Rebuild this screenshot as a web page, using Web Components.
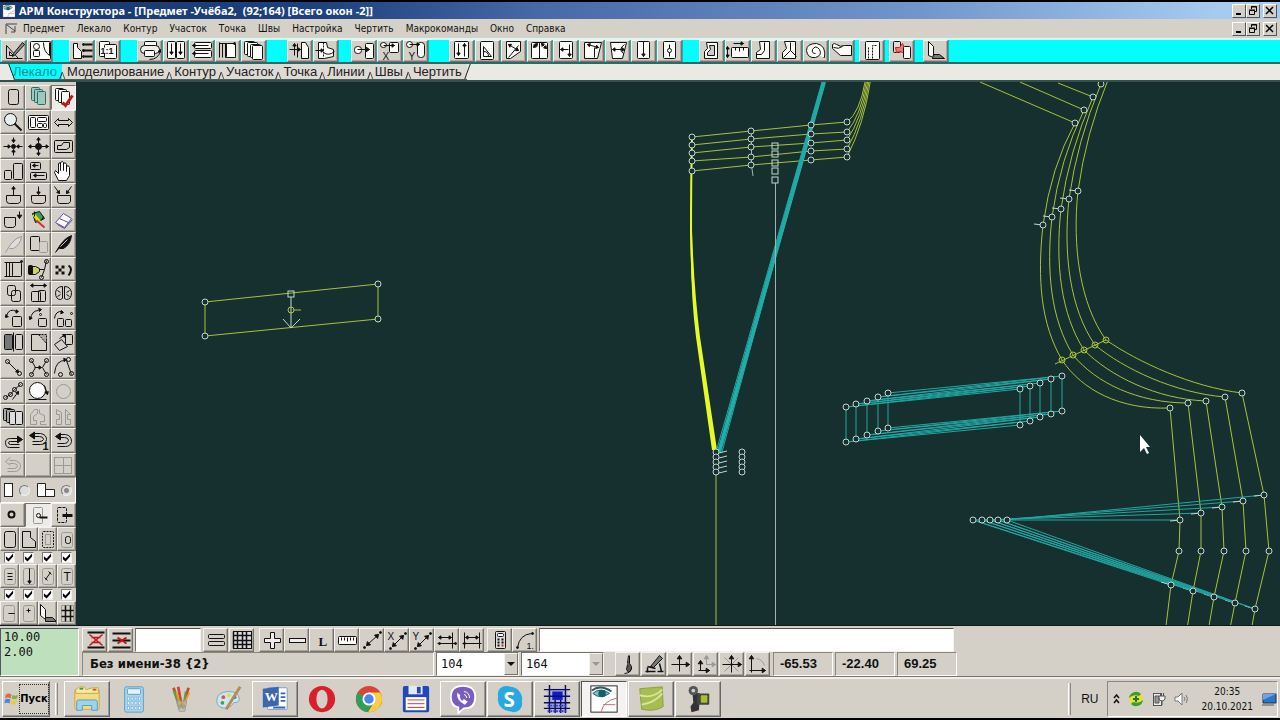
<!DOCTYPE html>
<html lang="ru">
<head>
<meta charset="utf-8">
<meta name="viewport" content="width=device-width, initial-scale=1">
<title>АРМ Конструктора</title>
<style>
html, body { margin: 0; height: 100%; background: #000; }
body { font: 10px/14px "DejaVu Sans Condensed", "Noto Sans", sans-serif; color: #111; }
</style>
</head>
<body>
<app-window></app-window>
<script>
/* ---------- small SVG drawing helpers ---------- */
const r = (x, y, w, h, f = 'none', rx = 1, s = '') => `<rect x="${x}" y="${y}" width="${w}" height="${h}" rx="${rx}" fill="${f}" ${s}/>`;
const p = (d, f = 'none', s = '') => `<path d="${d}" fill="${f}" ${s}/>`;
const c = (x, y, q, f = 'none', s = '') => `<circle cx="${x}" cy="${y}" r="${q}" fill="${f}" ${s}/>`;
const head = (x1, y1, x2, y2, n = 3) => {
  const t = Math.atan2(y2 - y1, x2 - x1);
  const q = a => `${(x2 - n * Math.cos(t + a)).toFixed(1)} ${(y2 - n * Math.sin(t + a)).toFixed(1)}`;
  return p(`M${x2} ${y2}L${q(.6)}L${q(-.6)}Z`, 'currentColor');
};
const a = (x1, y1, x2, y2, n) => p(`M${x1} ${y1}L${x2} ${y2}`) + head(x1, y1, x2, y2, n);
const aa = (x1, y1, x2, y2, n) => a(x1, y1, x2, y2, n) + head(x2, y2, x1, y1, n);
const t = (x, y, s, size = 9, w = 'normal', f = 'Liberation Sans') => `<text x="${x}" y="${y}" font-size="${size}" font-weight="${w}" font-family="${f}" fill="currentColor" stroke="none">${s}</text>`;
const W = '#fbfbf8', B = 'stroke-width="2"', GR = 'stroke="#9a9a94"';

const ICONS = {
  drafting: p('M4 6V19H20M4 6L16 19M7 12V16H11Z') + p('M20 3L11 14L10 17L13 15L22 5Z', '#888'),
  sketch: r(2, 2, 20, 18, W) + c(8, 7, 3) + r(5, 11, 6, 6) + p('M15 3Q15 12 21 16V3'),
  piece: p('M3 4V19H11V12L7 8V4Z', W) + p('M14 5H22M12 11H22M14 17H22', 'none', B) + c(13, 5, 1, '#111') + c(13, 11, 1, '#111') + c(13, 17, 1, '#111'),
  scale: r(3, 2, 10, 15, W) + r(8, 5, 12, 14, W) + p('M4 8H18V14H4Z', W, 'stroke="none"') + t(4, 14, '1:1', 9, 'bold'),
  printer: r(6, 2, 12, 8, W) + r(2, 6, 19, 8, '#eee', 4) + r(6, 11, 10, 6, W) + p('M11 20Q20 20 22 11') + head(20, 17, 22, 10),
  down2: r(3, 2, 8, 17, W) + r(12, 2, 8, 17, W) + a(7, 4, 7, 15) + a(16, 4, 16, 15),
  left2: r(4, 3, 17, 6, W) + r(4, 11, 17, 7, W) + a(18, 6, 2, 6) + a(18, 14, 2, 14),
  sheets: p('M3 4H14M3 3V18M6 4V18M9 4V18H19V5H9', W) + r(10, 4, 9, 14, W) + c(18, 4, 1, '#111'),
  stack: r(2, 2, 10, 13, W) + r(5, 3, 10, 14, W) + r(8, 5, 10, 13, W) + r(10, 6, 10, 14, W),
  moveup: p('M13 3H17L20 8V19H13Z', W) + a(1, 10, 12, 10) + a(6, 16, 6, 4) + p('M9 4V18'),
  tilt: p('M4 3H12L13 8L19 10V17L10 19H4Z', W) + a(1, 11, 9, 11) + p('M9 13Q14 17 20 12') + p('M9 3V18', 'none', 'stroke-dasharray="2 1"'),
  copyto: r(2, 7, 7, 7, W, 3) + r(13, 4, 8, 15, W) + a(5, 10, 17, 10, 4),
  copyx: r(2, 3, 6, 5, W, 3) + r(11, 3, 9, 10, W) + a(5, 6, 16, 6) + t(4, 20, 'X', 10),
  copyy: r(2, 2, 6, 6, W, 3) + r(13, 3, 7, 15, W, 3) + a(5, 5, 15, 5) + t(4, 20, 'Y', 10),
  updown: r(4, 2, 14, 17, W) + a(8, 4, 8, 16) + a(14, 17, 14, 4),
  angle: r(4, 2, 13, 18, W) + p('M7 17V7L15 17ZM7 12Q12 12 12 17'),
  diag: p('M4 2H18V12L8 19H4Z', W) + aa(6, 5, 16, 11) + p('M6 18L16 6'),
  mirror: r(3, 3, 16, 16, W) + p('M11 3V19') + aa(5, 8, 9, 4) + aa(13, 4, 18, 9),
  leftdown: r(5, 2, 13, 17, W) + a(15, 5, 15, 17) + a(14, 10, 6, 10),
  bend: p('M4 3H21L17 19H4Z', W) + aa(7, 5, 18, 8) + p('M14 8V18'),
  narrow: p('M4 3H20L16 19H6Z', W) + aa(6, 10, 18, 10) + p('M18 5Q11 10 17 14'),
  grain: r(5, 2, 12, 17, W) + a(11, 2, 11, 17),
  node: r(5, 2, 12, 17, W) + p('M11 5V17') + c(11, 11, 2, W),
  seam1: p('M6 3H17V19H4V12L7 9Z', W) + p('M9 6H14V16H7V13L10 10Z', '#ccc'),
  ruler: r(5, 8, 17, 10, W) + p('M9 8V11M13 8V12M17 8V11') + a(7, 4, 17, 4) + aa(1, 7, 1, 18),
  seam2: p('M7 2H17V19H4V13L8 10Z', W) + p('M12 3V11L9 15H4') ,
  seam3: p('M6 2H17V19H4V13L8 9Z', W) + p('M12 3V11L5 18M12 11L18 17'),
  spiral: p('M19 18H20Q22 6 12 4Q2 4 2 11Q3 19 11 18Q18 16 15 10Q11 5 8 10Q7 14 11 14', W) ,
  sleeve: p('M2 5Q4 3 6 5Q10 8 14 6H21V16H10L2 9Z', W) + p('M3 8Q8 10 12 7'),
  pocket: r(5, 2, 14, 18, W) + p('M12 19V6H17M8 19V7', 'none', 'stroke-dasharray="2 1"'),
  link: r(3, 2, 7, 11, '#ddd') + p('M5 8H9L12 4L14 8H17L14 14L10 12L6 13Z', '#e77', 'stroke="#c22"') + r(13, 7, 7, 12, W),
  fold: p('M4 2L9 7V18L4 16Z', W) + p('M9 15H15L20 19H8Z', '#777'),
  /* palette */
  page: r(7, 4, 10, 15, 'none', 2),
  layers: ['3 2', '6 4', '9 6'].map(s => { const [x, y] = s.split(' ').map(Number); return r(x + 2, y, 8, 13, '#9cc9bc', 1, 'stroke="#2b6b66"'); }).join(''),
  layersok: r(4, 3, 8, 12, W) + r(7, 4, 8, 13, W) + r(10, 6, 8, 13, W) + p('M11 17L14 20L21 10', 'none', 'stroke="#c01818" stroke-width="3"'),
  lens: c(9, 9, 6, '#e6eeee') + p('M13 13L20 20', 'none', B),
  layout: r(2, 5, 20, 14, W) + r(4, 7, 5, 10) + r(11, 7, 9, 4) + r(11, 13, 5, 4) + r(17, 13, 3, 4),
  wide: p('M3 12L7 8V10H17V8L21 12L17 16V14H7V16Z'),
  inward: a(12, 3, 12, 8) + a(12, 21, 12, 15) + a(2, 12, 9, 12) + a(21, 12, 15, 12) + c(12, 12, 2, '#111'),
  outward: a(12, 9, 12, 3) + a(12, 15, 12, 21) + a(9, 12, 2, 12) + a(15, 12, 22, 12) + c(12, 12, 3, '#111'),
  room: r(3, 6, 18, 12) + p('M6 15V11H10L12 8H18V13L15 15Z'),
  sizes: r(3, 11, 7, 9) + r(12, 4, 9, 16),
  shift: r(4, 3, 10, 7) + r(4, 13, 16, 7) + a(12, 6, 6, 6) + a(18, 16, 7, 16),
  hand: p('M7 21L3 13L4 11L7 14V4Q9 2 9 5V11V3Q11 1 12 3V11V4Q14 2 15 5V12V7Q17 5 18 8V16L15 21Z', '#fff'),
  boxup: p('M5 12H19V18Q18 20 16 20H8Q5 20 5 17Z') + a(12, 12, 12, 3),
  boxdown: p('M5 12H19V18Q18 20 16 20H8Q5 20 5 17Z') + a(12, 3, 12, 11),
  boxin: p('M6 12H19V18Q18 20 16 20H8Q6 20 6 17Z') + a(3, 3, 8, 10) + a(20, 3, 15, 10),
  boxside: p('M3 9H14V17Q13 19 11 19H6Q3 19 3 16Z') + a(18, 3, 18, 10, 4),
  paint: p('M6 5L13 3L18 10L9 14Z', '#37a052') + p('M7 6L13 13', 'none', 'stroke="#e8d820" stroke-width="3"') + p('M10 12L18 19', 'none', 'stroke="#c33" stroke-width="2"') + p('M8 3V8M15 12L17 8'),
  book: p('M4 14L12 5L20 10L13 19Z', '#fff', 'stroke="#5b50a0"') + p('M8 10Q12 12 17 14M6 16Q9 18 13 20L21 11', 'none', 'stroke="#5b50a0"'),
  feather0: p('M4 20L9 12Q14 5 20 4Q19 12 12 16L8 16', '#ddd', GR),
  pages: r(4, 4, 9, 14) + r(13, 9, 8, 11, 'none', 1, GR),
  feather: p('M4 20L9 12Q14 5 20 3Q19 12 12 16L8 16', '#111') + p('M9 14L16 7', 'none', 'stroke="#ccc"'),
  repeat: p('M5 5V19M8 5V19') + r(11, 5, 9, 14) + p('M3 5H17M3 19H12') + c(20, 4, 1, '#111'),
  point: p('M3 9H9L13 11V14L9 17H3Z', '#c8d858') + r(2, 8, 4, 9, '#111') + p('M13 12H18L15 20M18 12L20 3') + c(20, 4, 2) + c(15, 20, 2),
  marks: p('M4 8H7V11H4ZM10 8H13V11H10ZM7 11H10V14H7ZM4 14H7V17H4ZM10 14H13V17H10Z', '#111', 'stroke="none"') + p('M17 8Q22 11 17 18', 'none', B),
  overlap: r(6, 4, 8, 10, 'none', 2) + r(10, 9, 9, 11, 'none', 2),
  spread: r(5, 10, 9, 10) + r(12, 9, 7, 11) + aa(4, 4, 20, 4),
  brain: p('M11 5Q5 5 4 11Q4 18 9 18L11 17V5ZM13 5Q19 5 20 11Q20 18 15 18L13 17V5ZM6 9L9 11M18 9L15 11M6 15L9 13M18 15L15 13'),
  turnL: r(11, 10, 9, 10) + p('M15 5Q8 1 5 9') + head(9, 5, 4, 11) + head(10, 5, 17, 5),
  turnR: r(12, 12, 8, 8) + p('M4 13Q5 4 12 4') + head(7, 6, 3, 13) + head(10, 4, 15, 3) + c(14, 8, 1),
  turn3: r(6, 12, 6, 8) + r(14, 13, 6, 7) + p('M3 12Q4 4 11 5') + head(5, 5, 12, 6) + c(20, 7, 1),
  flip: r(3, 4, 8, 15, '#777') + r(14, 4, 7, 15) + p('M12 2V21'),
  corner: p('M5 4H14L20 10V20H5Z') + p('M12 4H20V13Z', '#aaa', 'stroke-dasharray="2 1"'),
  rotate: p('M3 14L10 9L16 16L8 20Z') + r(14, 4, 7, 10) + a(8, 8, 14, 4),
  segment: a(6, 6, 17, 17) + c(6, 6, 2) + c(18, 18, 2),
  pairs: p('M5 5L9 12L5 19M20 5L16 12L20 19') + c(5, 5, 2) + c(5, 19, 2) + c(20, 5, 2) + c(20, 19, 2) + a(8, 12, 15, 12),
  lasso: p('M3 18Q4 4 15 5L20 19') + c(17, 4, 2) + c(20, 18, 2) + c(9, 19, 2) + head(10, 5, 15, 4),
  chain: p('M4 18L9 15L13 10L19 5') + c(4, 18, 2) + c(9, 15, 2) + c(13, 10, 2) + c(19, 5, 2) + a(11, 20, 17, 12),
  disc: c(11, 11, 8, '#fff') + p('M2 20H20') + a(18, 6, 21, 15),
  circle0: c(12, 12, 7, 'none', GR),
  deck: r(2, 4, 8, 12, '#aaa') + r(5, 5, 8, 13, '#aaa') + r(8, 7, 6, 13, '#ddd') + r(14, 7, 7, 13, '#ddd'),
  jig0: p('M4 10V20H10V16H7V12L11 9V5H8L4 10M13 5V9L18 11V17H14V20H20', 'none', GR),
  jig1: p('M5 5V10H8V15H5V20H10V8ZM14 5V20H19V15H16V10H19Z', 'none', GR),
  redo: p('M18 19H8Q4 19 4 14Q4 10 9 10H18M18 16H9Q7 16 7 14Q7 13 9 13H18') + head(14, 11, 21, 11, 6),
  undo1: p('M7 5H14Q20 6 20 11Q19 16 14 16H6M7 8H13Q17 8 17 11Q16 13 13 13H6') + head(10, 7, 3, 7, 6) + t(16, 21, '1', 11, 'bold'),
  undo: p('M9 6H14Q20 7 20 13Q19 18 14 18H6M9 9H13Q17 9 17 12Q16 15 13 15H6') + head(12, 8, 4, 8, 6),
  undo0: p('M8 7H13Q19 8 19 13Q18 18 13 18H6M8 10H12Q16 10 16 13Q15 15 12 15H6M9 4L4 8L9 12', 'none', GR),
  blank: '',
  grid0: r(3, 4, 17, 16, 'none', 0, GR) + p('M12 4V20M3 12H20', 'none', GR),
  dot: c(10, 11, 3, 'none', B),
  cut: r(7, 4, 9, 16, 'none', 1, GR) + c(12, 12, 2) + p('M13 14H21', 'none', B),
  glue: r(6, 4, 9, 15, 'none', 1, 'stroke-dasharray="3 1"') + p('M11 12H21', 'none', 'stroke-width="3"'),
  smp1: r(6, 4, 11, 16, 'none', 2),
  smp2: p('M5 4H13V10L18 14V20H5Z'),
  smp3: r(6, 4, 11, 16, 'none', 1, 'stroke-dasharray="2 1"') + r(9, 7, 5, 10, 'none', 0, GR),
  smp4: r(6, 5, 11, 15, 'none', 2, GR) + r(10, 9, 5, 7, 'none', 2),
  txt: r(6, 4, 11, 16, 'none', 2, GR) + p('M9 9H14M9 12H14M9 15H14'),
  grn: r(6, 4, 11, 16, 'none', 2, GR) + a(12, 4, 12, 19),
  ntch: r(6, 4, 11, 16, 'none', 2, GR) + p('M9 15L14 8M8 13L11 16M12 7L15 10'),
  ltr: r(6, 4, 11, 16, 'none', 2, GR) + t(8, 16, 'T', 12),
  half: r(5, 4, 11, 16, 'none', 2, GR) + p('M10 12H16'),
  plus: r(6, 4, 11, 16, 'none', 2, GR) + p('M9 9H13M11 7V11'),
  hem: p('M4 3L9 8V18L4 14Z', '#fff') + p('M9 16H16L20 20H9Z', '#777'),
  hash: p('M6 4H18V20H6Z', 'none', GR) + p('M6 9H18M6 15H18M10 4V20M15 4V20', 'none', 'stroke-width="1.5"'),
  /* command strip */
  hourglass: p('M4 4H21M4 19H21', 'none', B) + p('M6 6L19 17M19 6L6 17M8 9H17M8 14H17', 'none', 'stroke="#c01818" stroke-width="1.5"'),
  strike: p('M3 5H21M3 12H21M3 19H21', 'none', B) + p('M8 9L17 15M17 9L8 15', 'none', 'stroke="#c01818" stroke-width="2"'),
  equals: r(4, 6, 16, 4) + r(4, 13, 16, 4),
  table: r(3, 3, 18, 17, '#ddd', 0) + p('M3 7H21M3 12H21M3 16H21M7 3V20M12 3V20M16 3V20M3 3V20', 'none', 'stroke-width="1.5"'),
  add: p('M10 4H14V10H20V14H14V20H10V14H4V10H10Z', '#eee'),
  minus: r(4, 10, 16, 4, '#eee', 0),
  ell: t(8, 17, 'L', 13, 'bold', 'Liberation Serif'),
  scalebar: r(3, 8, 18, 8, W) + p('M6 9V12M9 9V12M12 9V13M15 9V12M18 9V12'),
  dist: aa(6, 17, 18, 6, 4) + c(4, 19, 1, '#111') + c(20, 4, 1, '#111'),
  distx: aa(7, 18, 18, 7, 4) + t(2, 11, 'X', 10) + c(5, 20, 1, '#111') + c(20, 5, 1, '#111'),
  disty: aa(7, 18, 18, 7, 4) + t(2, 11, 'Y', 10) + c(5, 20, 1, '#111') + c(20, 5, 1, '#111'),
  gap1: p('M17 4V20M2 15H21') + aa(3, 9, 16, 9) + c(4, 15, 1, '#111') + c(20, 15, 1, '#111'),
  gap2: p('M4 4V20M19 4V20M2 15H21') + aa(5, 9, 18, 9) + c(4, 15, 1, '#111'),
  calc: r(7, 3, 10, 17, '#ddd') + r(9, 5, 6, 3, W) + p('M9 11H11M13 11H15M9 14H11M13 14H15M9 17H11', 'none', B) + p('M13 17H15', 'none', 'stroke="#c22" stroke-width="2"'),
  arc1: p('M4 19Q6 6 18 5') + c(4, 19, 1, '#111') + c(19, 5, 1, '#111') + t(13, 20, '1.', 9),
  inkpen: p('M12 3L11 11M13 3V11L15 14V17L12 20L10 17L11 12', '#555') + p('M14 17Q15 20 8 21'),
  scope: p('M8 14L17 3L20 6L11 15Z', '#777') + p('M3 19H13M5 15V20M15 19H21M17 11L19 19M5 14L13 16', 'none', 'stroke-width="1.5"'),
  axes: a(11, 19, 11, 3, 4) + a(3, 12, 21, 12, 4),
  axesoff: a(6, 18, 6, 8, 4) + a(4, 18, 15, 18, 4) + `<g color="#999" stroke="#999">${a(12, 12, 12, 3, 4)}${a(12, 12, 21, 12, 4)}</g>`,
  axesrot: p('M4 5L18 19M18 5L4 19', 'none', GR) + a(11, 20, 11, 3, 4) + a(2, 12, 21, 12, 4),
  axescorner: a(5, 20, 5, 3, 4) + a(3, 18, 19, 18, 4) + p('M10 6Q16 7 18 13', 'none', GR),
};

/* coloured 32x32 icons of the task bar */
const APPS = {
  folder: r(3, 6, 26, 21, '#f3dc84', 1, 'stroke="#c8a848"') + p('M4 6L8 3H13L15 6L22 4H28V10H4Z', '#f8eaa0', 'stroke="#c8a848"') + p('M5 28V19Q5 17 7 17H25Q27 17 27 19V28H21V23H11V28Z', '#9fd3ec', 'stroke="#4d9dc8"') + p('M8 5H12', 'none', 'stroke="#3a9d4c" stroke-width="2"') + p('M22 6H26', 'none', 'stroke="#d05030" stroke-width="2"'),
  calculator: r(6, 3, 20, 27, '#a8d4ee', 2, 'stroke="#5c9bc4"') + r(9, 5, 14, 6, '#e2f3fa', 1, 'stroke="#5c9bc4"') + [0,1,2].map(j => [0,1,2,3].map(i => r(9 + i * 4, 14 + j * 5, 2, 3, '#fff', 0, 'stroke="#6aa6cc" stroke-width=".6"')).join('')).join(''),
  brushes: p('M8 4L15 25M13 3L17 25M24 4L18 26', 'none', 'stroke="#c84a35" stroke-width="3"') + p('M8 7L15 27M21 8L18 27', 'none', 'stroke="#4ca844" stroke-width="2"') + p('M11 8L15 22M25 9L19 22', 'none', 'stroke="#e8a030" stroke-width="2"') + p('M11 18L22 18L20 29H14Z', '#c9c0b5', 'fill-opacity=".5" stroke="#999"'),
  palette: p('M4 18Q4 9 16 8Q28 8 28 16Q28 20 22 20Q20 24 15 26Q4 26 4 18Z', '#cfe5f0', 'stroke="#7ba5bd"') + c(11, 14, 2, '#e05050') + c(17, 12, 2, '#e8d840') + c(10, 20, 2, '#40a050') + c(23, 14, 2, '#4878d0') + p('M29 3L14 27', 'none', 'stroke="#b98a50" stroke-width="3"'),
  word: r(8, 4, 21, 23, '#fff', 1, 'stroke="#7898c8"') + p('M3 5L20 3V23L3 25Z', '#3b66b0') + p('M22 10H27M22 14H27M22 18H27M14 25H27', 'none', 'stroke="#3b66b0" stroke-width="2"') + `<text x="5" y="18" font-size="14" font-weight="bold" font-family="Liberation Serif" fill="#fff">W</text>`,
  opera: `<ellipse cx="16" cy="16" rx="14" ry="14" fill="#d8202c"/><ellipse cx="16" cy="16" rx="6" ry="10" fill="#d4d0c8"/>`,
  chrome: c(16, 16, 14, '#dc4437') + p('M16 16L4 9A14 14 0 0 0 15 30L21 20Z', '#2f9e57') + p('M16 9H28A14 14 0 0 1 15 30L21 20Z', '#f8ce48') + c(16, 16, 7, '#fff') + c(16, 16, 5, '#4787ee'),
  floppy: r(2, 2, 28, 28, '#2048b8', 2) + r(8, 2, 15, 9, '#e4eaf4', 0) + r(17, 3, 4, 7, '#2048b8', 0) + r(5, 14, 22, 14, '#fff', 0) + p('M7 17H25M7 21H25M7 25H25', 'none', 'stroke="#c33"'),
  viber: p('M16 2Q29 2 29 14Q29 26 17 26L11 31V25Q3 23 3 14Q3 2 16 2Z', '#7b5cc0', 'stroke="#fff" stroke-width="2"') + p('M10 9Q8 17 18 22L21 19L17 16L15 18Q12 15 13 12Z', '#fff') + p('M17 8Q23 9 23 15M17 11Q20 12 20 15', 'none', 'stroke="#fff"'),
  skype: c(12, 11, 9, '#28a8e0') + c(20, 21, 9, '#28a8e0') + c(16, 16, 13, '#28a8e0') + `<text x="9" y="24" font-size="22" font-weight="bold" font-family="Open Sans" fill="#fff">S</text>`,
  grid: r(6, 5, 21, 23, '#a8b0e0', 0) + r(11, 8, 11, 9, '#1018d0', 0) + p('M2 6H30M2 13H30M2 20H30M2 26H30M8 1V31M14 17V31M20 17V31M25 1V31', 'none', 'stroke="#101050" stroke-width="1.5"') + p('M6 23H27M6 29H27', 'none', 'stroke="#2838e0" stroke-dasharray="2 1" stroke-width="2"'),
  eye: r(2, 2, 28, 28, '#fff', 0, 'stroke="#222"') + p('M4 10Q12 3 22 10Q12 17 4 10Z', '#7cc0c0', 'stroke="#205868"') + c(14, 10, 4, '#12606a') + p('M3 7Q12 0 24 8', 'none', 'stroke="#356" stroke-width="2"') + p('M13 30Q15 18 30 15M15 22H28', 'none', 'stroke="#d06070"'),
  note: p('M4 5L28 3L29 24Q20 30 6 27Z', '#a8bd50', 'stroke="#8a9e3c"') + p('M4 12Q18 16 28 6M6 22Q20 20 28 10', 'none', 'stroke="#d8e4a0" stroke-width="2"'),
  camera: p('M10 8L18 10L17 28L9 30L8 24L11 20Z', '#333') + c(11, 7, 5, '#555') + c(11, 7, 2, '#ccc') + r(15, 10, 13, 12, '#444') + r(19, 12, 7, 8, '#a8c030'),
  flag: p('M3 8Q9 3 15 7L13 15Q8 11 2 15Z', '#e56a3a') + p('M17 8Q22 11 28 8L26 15Q21 18 15 15Z', '#7cb840') + p('M2 17Q8 14 13 17L11 25Q6 22 1 25Z', '#4a88d8') + p('M15 18Q20 21 26 18L24 26Q18 29 13 26Z', '#f0c838'),
};
const svgIcon = (n, size = 24) => size === 24
  ? `<svg viewBox="0 0 24 24" width="24" height="24" fill="none" stroke="currentColor" aria-hidden="true"><g transform="translate(.5 .5)">${ICONS[n]}</g></svg>`
  : `<svg viewBox="0 0 32 32" width="${size}" height="${size}" fill="none" aria-hidden="true">${APPS[n]}</svg>`;

const BASE = `
  *, *::before, *::after { box-sizing: border-box; }
  button, input, select { font: inherit; color: inherit; margin: 0; padding: 0; border-radius: 0; }
  svg { display: block; flex: none; }
`;
class Part extends HTMLElement {
  constructor() { super(); this.attachShadow({ mode: 'open' }); }
  connectedCallback() { this.shadowRoot.innerHTML = `<style>${BASE}${this.css}</style>${this.html}`; }
}
const define = (name, css, html) => customElements.define(name, class extends Part {
  get css() { return css; }
  get html() { return typeof html === 'function' ? html(this) : html; }
});

/* ---------- leaf elements ---------- */
define('tool-button', `
  :host { display: block; width: 25px; min-width: 0; min-height: 0; color: #111; }
  button { display: flex; align-items: center; justify-content: center; width: 100%; height: 100%; overflow: hidden;
    background: #d4d0c8; border: 1px solid; border-color: #f4f2ee #77746c #77746c #f4f2ee; box-shadow: inset -1px -1px #a9a69e; }
  svg { margin: -4px; }
  :host([pressed]) button { background: #ecebe8; border-color: #77746c #f4f2ee #f4f2ee #77746c; box-shadow: none; }
`, e => `<button type="button" aria-label="${e.getAttribute('label') || e.getAttribute('icon')}">${svgIcon(e.getAttribute('icon'))}</button>`);
const tool = (n, extra = '') => `<tool-button icon="${n}" ${extra}></tool-button>`;

define('window-controls', `
  :host { display: flex; margin-right: 3px; }
  button { width: 14px; height: 14px; background: #d4d0c8; border: 1px solid; border-color: #fff #555 #555 #fff; }
  button:last-child { margin-left: 3px; }
`, `<button aria-label="Свернуть"><svg viewBox="0 0 12 12" width="12" height="12"><path d="M3 9H8" stroke="#000" stroke-width="2"/></svg></button>
  <button aria-label="Восстановить"><svg viewBox="0 0 12 12" width="12" height="12" fill="none" stroke="#000"><path d="M4.500 4V1.500H9.500V6.500H8M4 2H10M2.500 5.500H7.500V9.500H2.500ZM2 5H8"/></svg></button>
  <button aria-label="Закрыть"><svg viewBox="0 0 12 12" width="12" height="12"><path d="M2 2L9 9M9 2L2 9" stroke="#000" stroke-width="1.5"/></svg></button>`);

define('read-out', `
  :host { display: flex; align-items: center; padding: 0 6px; border: 1px solid; border-color: #8a877f #fff #fff #8a877f;
    font: bold 13px/16px "Liberation Sans", sans-serif; color: #111; }
`, '<slot></slot>');

define('combo-box', `
  :host { display: block; position: relative; width: 83px; font: 12px/16px "DejaVu Sans Mono", monospace; }
  select { appearance: none; width: 100%; height: 100%; padding: 0 4px; background: #fff; border: 1px solid; border-color: #77746c #f4f2ee #f4f2ee #77746c; }
  span { position: absolute; right: 1px; top: 1px; bottom: 1px; width: 14px; display: grid; place-items: center; pointer-events: none;
    background: #d4d0c8; border: 1px solid; border-color: #f4f2ee #77746c #77746c #f4f2ee; }
  span::before { content: ""; border: 4px solid transparent; border-top-color: #111; border-bottom: 0; }
  :host([dim]) span::before { border-top-color: #999; }
`, e => `<select aria-label="${e.getAttribute('label')}"><option>${e.getAttribute('value')}</option></select><span></span>`);

/* ---------- title, menu, tools, tabs ---------- */
define('title-bar', `
  :host { display: flex; align-items: center; height: 17px; background: linear-gradient(90deg, #17386f, #1d417f 25%, #4669a8 42%, #7097cc 72%, #a6caf0 95%); color: #fff; }
  h1 { margin: 0 auto 0 3px; font: bold 11px/15px "Noto Sans", sans-serif; white-space: pre; }
  .logo { margin-left: 2px; }
`, `<svg class="logo" viewBox="0 0 32 32" width="14" height="14" aria-hidden="true">${APPS.eye}</svg>
  <h1>АРМ Конструктора - [Предмет -Учёба2,  (92;164) [Всего окон -2]]</h1><window-controls></window-controls>`);

define('menu-bar', `
  :host { display: flex; align-items: center; height: 19px; background: #d5d1c8; }
  nav { display: flex; gap: 12px; margin: 0 auto 0 4px; }
  a { color: inherit; text-decoration: none; white-space: nowrap; }
  svg { margin-left: 5px; }
`, () => `<svg viewBox="0 0 14 14" width="14" height="14" fill="none" stroke="#444"><path d="M1 12V2H12M2 3L10 9M10 4V10H6"/></svg>
  <nav aria-label="Главное меню">${['Предмет','Лекало','Контур','Участок','Точка','Швы','Настройка','Чертить','Макрокоманды','Окно','Справка'].map(s => `<a href="#">${s}</a>`).join('')}</nav><window-controls></window-controls>`);

define('tool-strip', `
  :host { display: flex; height: 26px; padding-left: 1px; background: #0ff; border-top: 2px solid #dcf6f2; border-bottom: 2px solid #2c6866; }
  div { display: flex; gap: 1px; padding-right: 1px; background: #2aa9a6; margin-right: var(--gap); }
`, () => [
    [16, 'drafting sketch'], [16, 'piece scale'], [20, 'printer down2 left2 sheets stack'], [12, 'moveup tilt'], [20, 'copyto copyx copyy'],
    [16, 'updown angle diag mirror leftdown bend narrow grain node'], [4, 'seam1 ruler seam2 seam3 spiral sleeve'], [4, 'pocket'], [8, 'link'], [0, 'fold'],
  ].map(([g, s]) => `<div style="--gap:${g}px">${s.split(' ').map(n => tool(n)).join('')}</div>`).join(''));

define('tab-strip', `
  :host { display: flex; height: 18px; padding-left: 8px; background: #ebe9e4; border-bottom: 2px solid #33504c; overflow: hidden; }
  button { position: relative; padding: 0 5px 0 5px; border: 0; background: #dedbd4; border-bottom: 1px solid #555; font: 13px/15px "Liberation Sans", sans-serif; color: #222; white-space: nowrap; }
  button::after { content: ""; position: absolute; right: -1px; top: 0; bottom: 0; width: 1px; background: #222; transform: skewX(-20deg); }
  button::before { content: ""; position: absolute; left: 1px; top: 8px; bottom: 0; width: 1px; background: #555; transform: skewX(20deg); }
  button[aria-selected=true] { background: #0ff; color: #0a8c90; clip-path: polygon(0 0, 100% 0, 100% 100%, 6px 100%); }
  button[aria-selected=true]::before { left: 3px; top: 0; background: #111; }
`, () => ['Лекало','Моделирование','Контур','Участок','Точка','Линии','Швы','Чертить'].map((s, i) => `<button role="tab" aria-selected="${i === 0}">${s}</button>`).join(''));

/* ---------- left palette ---------- */
define('tool-palette', `
  :host { display: flex; flex-direction: column; width: 76px; padding-top: 3px; background: #d4d0c8; }
  .main { flex: 16; display: grid; grid-template: repeat(16, minmax(0, 1fr)) / repeat(3, 1fr); }
  .row { height: 24px; display: grid; grid-auto-flow: column; grid-auto-columns: 1fr; }
  tool-button { width: auto; }
  .radios { height: 26px; display: flex; align-items: center; justify-content: space-around; border: 1px solid; border-color: #999 #fff #fff #999; }
  .checks { height: 13px; display: grid; grid-template-columns: repeat(4, 1fr); place-items: center; }
  input { appearance: none; display: block; }
  input[type=radio] { width: 11px; height: 11px; border: 1px solid; border-color: #777 #eee #eee #777; border-radius: 50%; background: #ddd; }
  input[type=radio]:checked { background: radial-gradient(circle, #888 0 2px, #ddd 3px); }
  input[type=checkbox] { width: 11px; height: 11px; background: #fff; border: 1px solid; border-color: #777 #eee #eee #777; }
  input[type=checkbox]::before { content: ""; display: block; height: 9px; background: #000; clip-path: polygon(10% 35%, 40% 60%, 90% 5%, 90% 40%, 40% 95%, 10% 70%); }
`, () => {
  const main = 'page layers layersok lens layout wide inward outward room sizes shift hand boxup boxdown boxin boxside paint book feather0 pages feather repeat point marks overlap spread brain turnL turnR turn3 flip corner rotate segment pairs lasso chain disc circle0 deck jig0 jig1 redo undo1 undo undo0 blank grid0';
  const checks = k => `<div class="checks">${[1, 2, 3, 4].map(i => `<input type="checkbox" checked aria-label="Показ ${k}.${i}">`).join('')}</div>`;
  const row = s => `<div class="row">${s.split(' ').map(n => tool(n, n === 'cut' ? 'pressed' : '')).join('')}</div>`;
  return `<div class="main">${main.split(' ').map(n => tool(n, n === 'layersok' ? 'pressed' : '')).join('')}</div>
  <div class="radios"><svg width="9" height="14" fill="#fff" stroke="#222"><rect x=".5" y=".5" width="8" height="13"/></svg><input type="radio" name="v" aria-label="Один лист">
  <svg width="18" height="14" fill="#fff" stroke="#222"><path d="M.5.500H8.500V6.500H17.500V13.500H.5ZM8.500 6V13"/></svg><input type="radio" name="v" checked aria-label="Несколько листов"></div>
  ${row('dot cut glue')}${row('smp1 smp2 smp3 smp4')}${checks(1)}${row('txt grn ntch ltr')}${checks(2)}${row('half plus hem hash')}`;
});

/* ---------- drawing area ---------- */
define('pattern-canvas', `
  :host { display: block; min-width: 0; background: #16302f; overflow: hidden; }
  svg { width: 100%; height: 100%; }
  .y { stroke: #a9c23a; } .n { stroke: #c3d6d0; fill: #16302f; } .ny { stroke: #b4cc28; }
  .c { stroke: #21a7a3; } .w { stroke: #c3d6d0; }
`, () => {
  const at = (n, f) => Array.from({ length: n }, (_, i) => f(i)).join('');
  const P = (d, k) => `<path class="${k}" d="${d}"/>`;
  const N = ([x, y], k = 'n') => `<circle class="${k}" cx="${x}" cy="${y}" r="3"/>`;
  const S = (x, y) => `<rect class="w" x="${x - 3}" y="${y - 3}" width="6" height="6"/>`;
  const yl = [137,145,153,161,171], ym = [131,139,147,157,165], yc = [125,134,143,151,160], yr = [122,132,140,149,157];
  const top = [[1075,123],[1084,110],[1093,97],[1101,84],[1108,80]];
  const mid = [[1043,225],[1052,217],[1061,209],[1069,199],[1078,191]];
  const low = [[1062,360],[1073,355],[1084,350],[1095,345],[1106,340]];
  const end = [[1170,408],[1188,403],[1206,401],[1225,397],[1242,393]];
  const s1 = [[1180,520],[1201,513],[1222,507],[1243,501],[1264,495]];
  const s2 = [[1179,551],[1201,551],[1224,551],[1246,551],[1269,551]];
  const s3 = [[1171,585],[1193,591],[1214,597],[1235,603],[1255,609]];
  const apex = [973, 982, 990, 998, 1007];
  const pl = [[846,407],[856,404],[867,401],[878,397],[888,393]], pr = [[1020,389],[1030,386],[1040,383],[1051,379],[1062,376]];
  const bl = [[846,442],[856,439],[867,435],[878,431],[888,428]], br = [[1020,425],[1030,421],[1040,417],[1051,414],[1062,411]];
  return `<svg viewBox="76 82 1204 544" preserveAspectRatio="xMinYMin slice" fill="none" role="img" aria-label="Лекала">
  ${P('M205 302L378 284V319L205 336Z', 'y')}${P('M291 297V328M283 319L291 328L300 319', 'w')}${P('M294 310H301', 'y')}${N([291,310], 'ny')}${S(291,294)}
  ${[[205,302],[378,284],[378,319],[205,336]].map(q => N(q)).join('')}
  ${at(5, i => P(`M692 ${yl[i]}L751 ${ym[i]}L811 ${yc[i]}L847 ${yr[i]}Q${860 + i} ${112 + i * 3} ${865 + i * 1.3} 82`, 'y'))}
  <path d="M692 137Q691 180 691 234Q692 290 698 337L714 446" stroke="#e6fa28" stroke-width="2"/>
  <path d="M691 230Q690 290 696 337L712 450H717L700 337Q694 290 692 230Z" fill="#e6fa28"/>
  ${P('M716 450V626', 'y')}
  <path d="M824 82Q777 246 719 452" stroke="#21b8b4" stroke-width="4"/>
  ${at(4, i => P(`M${822 + i} 82Q${775 + i} 246 ${716 + i * 2} 452`, 'c'))}
  <path d="M775.500 183V626M751.500 131V165L753 176" stroke="#a3b3b0"/>
  ${at(5, i => N([692, yl[i]]) + N([751, ym[i]]) + N([811, yc[i]]) + N([847, yr[i]]) + S(775, 146 + [0,8,17,25,34][i]) + N([716, 452 + i * 5]) + N([742, 452 + i * 5]) + P(`M719 ${453 + i * 5}L727 ${451 + i * 5}`, 'w'))}
  ${P('M980 82L1075 123M1020 82L1084 110M1058 83L1093 97M1055 364L1106 340', 'y')}
  ${at(5, i => {
    const [x0, y0] = top[i], [x1, y1] = mid[i], [x2, y2] = low[i], [x3, y3] = end[i];
    return P(`M${x0} ${y0}Q${x1 + 8} ${y1 - 58} ${x1} ${y1}C${x1 - 6} ${y1 + 55} ${x1 - 2 + i} ${y2 - 36} ${x2} ${y2}C${x2 + 20 + i * 3} ${y2 + 30 - i * 2} ${x3 - 50} ${y3 + 2 - i * 2} ${x3} ${y3}L${s1[i]}L${s2[i]}L${s3[i]}L${1166 + i * 21.500} 626`, 'y')
      + P(`M${apex[i]} 520L${s1[i]}M${apex[i]} 520L${s3[i]}M${pl[i]}L${pr[i]}V${br[i][1]}L${bl[i]}Z`, 'c')
      + P(`M${x1} ${y1}l-9 -1M${s1[i]}l-10 1M${s3[i]}l-10 -3`, 'w');
  })}
  ${at(4, i => P(`M${pl[i]}L${pr[i + 1]}M${bl[i]}L${br[i + 1]}M${apex[i]} 520L${s3[i + 1]}`, 'c'))}
  ${at(5, i => (i < 4 ? N(top[i]) : '') + N(mid[i]) + N(low[i], 'ny') + N(end[i]) + N(s1[i]) + N(s2[i]) + N(s3[i]) + N([apex[i], 520]) + N(pl[i]) + N(pr[i]) + N(bl[i]) + N(br[i]))}
  <path d="M1140 435V452L1144 448L1147 454L1149 453L1146 447H1150Z" fill="#fff"/></svg>`;
});

/* ---------- command and status panel ---------- */
define('status-panel', `
  :host { display: grid; grid-template-columns: 79px 1fr; column-gap: 3px; height: 51px; padding-top: 2px; background: #d4d0c8; border-bottom: 1px solid #77746c; box-sizing: border-box; }
  output { padding: 1px 3px; background: #bfe0bd; border: 1px solid; border-color: #556 #fff #fff #556; font: 12px/15px "DejaVu Sans Mono", monospace; white-space: pre-line; }
  .rows { display: grid; grid-template-rows: 24px 24px; min-width: 0; }
  .rows > div { display: flex; min-width: 0; }
  input { width: 66px; border: 1px solid; border-color: #55524c #f4f2ee #f4f2ee #77746c; background: #fff; margin: 0 2px; }
  .g { margin-right: 5px; } .h { margin-right: 1px; } .k { margin-right: 3px; }
  .cmd { flex: 0 1 415px; min-width: 80px; }
  .name { width: 352px; margin-right: 2px; padding-left: 7px; box-sizing: border-box; font: bold 13px/18px "DejaVu Sans Condensed", sans-serif; }
  combo-box + combo-box { margin: 0 11px 0 2px; }
  .num { width: 60px; margin-left: 2px; box-sizing: border-box; }
`, () => `<output>10.00
2.00</output><div class="rows">
  <div>${tool('hourglass', 'class="h"')}${tool('strike')}<input aria-label="Значение">${tool('equals', 'class="h"')}${tool('table', 'class="g"')}${'add minus ell scalebar dist distx disty gap1'.split(' ').map(n => tool(n)).join('')}${tool('gap2', 'class="k"')}${tool('calc')}${tool('arc1')}<input class="cmd" aria-label="Командная строка"></div>
  <div><read-out class="name">Без имени-38 {2}</read-out><combo-box label="Размер" value="104"></combo-box><combo-box label="Рост" value="164" dim></combo-box>
  ${'inkpen scope axes axesoff axesrot axescorner'.split(' ').map(n => tool(n, 'class="h"')).join('')}
  <read-out class="num">-65.53</read-out><read-out class="num">-22.40</read-out><read-out class="num">69.25</read-out></div></div>`);

/* ---------- task bar ---------- */
define('task-bar', `
  :host { display: flex; align-items: center; height: 41px; padding: 0 2px; background: #d4d0c8; border-top: 2px solid #f0eeea; box-sizing: border-box; }
  button { display: flex; align-items: center; justify-content: center; height: 36px; width: 46px; background: none; border: 1px solid transparent; }
  button.open { background: #d4d0c8; border-color: #fff #666 #666 #fff; box-shadow: inset -1px -1px #999; }
  button.now { background: #f4f3f1; border-color: #555 #fff #fff #555; }
  .start { width: 48px; gap: 1px; font: bold 11px/28px "DejaVu Sans Condensed", sans-serif; color: #000; }
  .start span { outline: 1px dotted #333; }
  .apps { display: flex; gap: 1px; margin: 0 auto 0 6px; }
  .sep { width: 3px; height: 32px; margin-left: 5px; border-left: 1px solid #fff; border-right: 1px solid #888; }
  .lang { margin: 0 8px 0 10px; font: 12px/16px "Liberation Sans", sans-serif; }
  .tray { display: flex; align-items: center; gap: 8px; height: 36px; padding: 0 0 0 5px; border: 1px solid; border-color: #888 #fff #fff #888; }
  time { margin: 0 0 0 4px; text-align: center; line-height: 15px; white-space: pre-line; }
`, () => `<button class="start open"><svg viewBox="0 0 30 30" width="15" height="15">${APPS.flag}</svg><span>Пуск</span></button><i class="sep"></i>
  <div class="apps">${['folder:open','calculator:','brushes:','palette:','word:open','opera:','chrome:','floppy:','viber:open','skype:open','grid:open','eye:now','note:open','camera:open'].map(s => { const [n, k] = s.split(':'); return `<button class="${k}" aria-label="${n}">${svgIcon(n, 30)}</button>`; }).join('')}</div>
  <i class="sep"></i><span class="lang">RU</span>
  <div class="tray"><svg width="7" height="10" fill="none" stroke="#111" stroke-width="1.5"><path d="M1 4L3.500 1L6 4M1 9L3.500 6L6 9"/></svg>
  <svg width="16" height="16" viewBox="0 0 16 16"><circle cx="8" cy="8" r="7" fill="#e4e03a"/><path d="M1 7A7 7 0 0 1 13 3L11 5Q5 3 1 7M15 9A7 7 0 0 1 3 13L5 11Q11 13 15 9" fill="#3c9c30"/><path d="M8 5V11M5 8H11" stroke="#287820" stroke-width="2"/></svg>
  <svg width="14" height="16" viewBox="0 0 14 16" fill="#eee" stroke="#555"><rect x="1.500" y="2.500" width="8" height="12"/><path d="M3 5H7V12H3Z" fill="#999"/><path d="M7 5H13V8Q12 10 10 10Q7 10 7 7ZM8.500 2V5M11.500 2V5M10 10V14"/></svg>
  <svg width="16" height="16" viewBox="0 0 16 16" fill="#fff" stroke="#777"><path d="M1 6H4L8 2V14L4 10H1Z"/><path d="M10 6Q12 8 10 10M12 4Q15 8 12 12" fill="none"/></svg>
  <time datetime="2021-10-20T20:35">20:35
20.10.2021</time><svg width="16" height="16" viewBox="0 0 16 16"><path d="M2 3H15V12H2Z" fill="#2f74c8" stroke="#234"/><path d="M2 3H15L2 9Z" fill="#66a6e4"/><path d="M1 14H13" stroke="#555"/></svg></div>`);

/* ---------- shell ---------- */
define('app-window', `
  :host { display: flex; flex-direction: column; min-height: 100vh; box-sizing: border-box; padding: 2px 0; background: #000; }
  main { flex: 1; display: grid; grid-template-columns: 76px 1fr; min-height: 400px; border-bottom: 1px solid #0c1c1c; }
  pattern-canvas { height: 0; min-height: 100%; }
`, `<title-bar></title-bar><menu-bar></menu-bar><tool-strip></tool-strip><tab-strip></tab-strip>
  <main><tool-palette></tool-palette><pattern-canvas></pattern-canvas></main>
  <status-panel></status-panel><task-bar></task-bar>`);
</script>
</body>
</html>
